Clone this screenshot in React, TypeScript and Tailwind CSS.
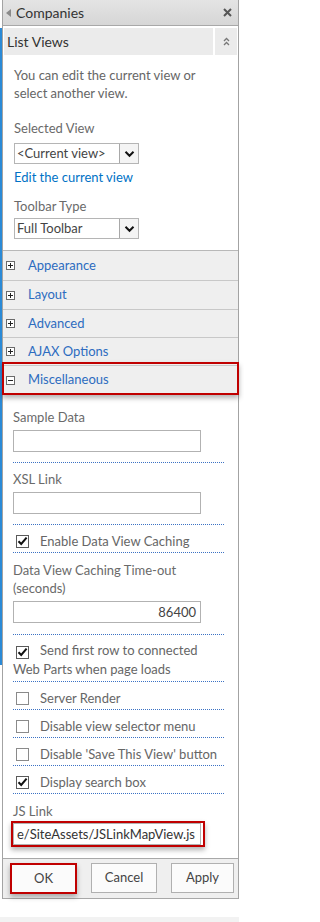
import React from 'react';

const FONT = { fontFamily: 'Lato, "Open Sans", "Liberation Sans", sans-serif' };

function PlusBox({ open }: { open?: boolean }) {
  return (
    <span className="w-[9px] h-[9px] border border-[#6b6b6b] bg-white flex items-center justify-center shrink-0">
      <svg width="7" height="7" viewBox="0 0 7 7">
        <rect x="1" y="3" width="5" height="1" fill="#222" />
        {!open && <rect x="3" y="1" width="1" height="5" fill="#222" />}
      </svg>
    </span>
  );
}

function Check({ checked }: { checked?: boolean }) {
  return (
    <span
      className={`inline-flex w-[13px] h-[13px] border bg-white items-center justify-center align-[-2px] ${
        checked ? 'border-[#5a5a5a]' : 'border-[#8a8a8a]'
      }`}
    >
      {checked && (
        <svg width="11" height="10" viewBox="0 0 11 10">
          <path d="M1.5 5.2 L4.2 8 L9.6 1.6" fill="none" stroke="#111" strokeWidth="2" />
        </svg>
      )}
    </span>
  );
}

function SelectBox({ value }: { value: string }) {
  return (
    <div className="w-[125px] h-[21px] border border-[#b5b5b5] bg-white flex items-stretch">
      <span className="flex-1 pl-[2px] text-[13px] leading-[19px] text-[#444]">{value}</span>
      <span className="w-[19px] border-l border-[#a8a8a8] bg-[#f4f4f4] flex items-center justify-center">
        <svg width="11" height="8" viewBox="0 0 11 8">
          <path d="M1.5 1.8 L5.5 5.8 L9.5 1.8" fill="none" stroke="#111" strokeWidth="2" />
        </svg>
      </span>
    </div>
  );
}

function TextBox({ value, right }: { value?: string; right?: boolean }) {
  return (
    <div
      className={`w-[188px] h-[22px] border border-[#b2b2b2] bg-white text-[13px] leading-[20px] text-[#444] px-[4px] ${
        right ? 'text-right' : ''
      }`}
    >
      {value}
    </div>
  );
}

function Section({ label, open, h }: { label: string; open?: boolean; h: string }) {
  return (
    <div className={`${h} relative flex items-center gap-[13px] pl-[3px] bg-[#efefef] border-b border-[#c8c8c8]`}>
      <PlusBox open={open} />
      <span className="text-[13px] text-[#2d6cc0]">{label}</span>
      {open && (
        <span className="absolute -left-[1px] -right-[1px] -top-[4px] -bottom-[1px] border-2 border-[#c00000] shadow-[0_3px_5px_rgba(0,0,0,0.3)]" />
      )}
    </div>
  );
}

function CheckRow({ label, checked }: { label: string; checked?: boolean }) {
  return (
    <div className="pt-[7px] pb-[2px] pl-[3px] h-[28px] border-b border-dotted border-[#3c72c4] flex items-center gap-[11px] text-[13px] leading-[18px] text-[#666]">
      <Check checked={checked} />
      <span>{label}</span>
    </div>
  );
}

export default function App() {
  return (
    <div className="w-[244px] h-[922px] bg-white relative overflow-hidden" style={FONT}>
      <div className="absolute left-0 top-[28px] h-[637px] w-[2px] bg-[#2b8ad6]" />

      <div className="ml-[2px] w-[237px] border-x border-[#a3a3a3]">
        {/* Header */}
        <div className="h-[26px] flex items-center bg-gradient-to-b from-[#e4e4e4] to-[#d6d6d6] border-b border-[#a8a8a8] pl-[3px] pr-[6px]">
          <svg width="6" height="8" viewBox="0 0 6 8" className="mr-[4px]">
            <path d="M5 0 L5 8 L0 4 Z" fill="#8a8a8a" />
          </svg>
          <span className="text-[14px] text-[#333] flex-1">Companies</span>
          <svg width="9" height="9" viewBox="0 0 9 9">
            <path d="M1 1 L8 8 M8 1 L1 8" stroke="#555" strokeWidth="2" />
          </svg>
        </div>

        {/* List Views */}
        <div className="flex gap-[2px] px-[1px] pt-[2px]">
          <div className="flex-1 h-[27px] bg-[#ebebeb] flex items-center pl-[3px] text-[14px] text-[#333]">List Views</div>
          <div className="w-[22px] h-[27px] bg-[#ebebeb] flex items-center justify-center">
            <svg width="7" height="9" viewBox="0 0 7 9">
              <path d="M1 4 L3.5 1.5 L6 4 M1 8 L3.5 5.5 L6 8" fill="none" stroke="#777" strokeWidth="1.3" />
            </svg>
          </div>
        </div>

        {/* List view settings */}
        <div className="pl-[11px] pt-[11px] pb-[11px]">
          <p className="text-[13px] leading-[18px] text-[#666] pr-[8px]">
            You can edit the current view or select another view.
          </p>
          <p className="mt-[17px] text-[13px] leading-[18px] text-[#6a6a6a]">Selected View</p>
          <div className="mt-[6px]">
            <SelectBox value="<Current view>" />
          </div>
          <p className="mt-[4px] text-[13px] leading-[18px] text-[#0072c6]">Edit the current view</p>
          <p className="mt-[11px] text-[13px] leading-[18px] text-[#6a6a6a]">Toolbar Type</p>
          <div className="mt-[3px]">
            <SelectBox value="Full Toolbar" />
          </div>
        </div>

        {/* Sections */}
        <div className="border-t border-[#b8b8b8]">
          <Section label="Appearance" h="h-[30px]" />
          <Section label="Layout" h="h-[29px]" />
          <Section label="Advanced" h="h-[28px]" />
          <Section label="AJAX Options" h="h-[28px]" />
          <Section label="Miscellaneous" h="h-[29px]" open />
        </div>

        {/* Miscellaneous */}
        <div className="ml-[10px] mr-[14px]">
          <div className="pt-[13px] pb-[10px] border-b border-dotted border-[#3c72c4]">
            <p className="text-[13px] leading-[18px] text-[#6a6a6a]">Sample Data</p>
            <div className="mt-[4px]">
              <TextBox />
            </div>
          </div>
          <div className="pt-[7px] pb-[10px] border-b border-dotted border-[#3c72c4]">
            <p className="text-[13px] leading-[18px] text-[#6a6a6a]">XSL Link</p>
            <div className="mt-[4px]">
              <TextBox />
            </div>
          </div>
          <CheckRow label="Enable Data View Caching" checked />
          <div className="pt-[8px] pb-[11px] border-b border-dotted border-[#3c72c4]">
            <p className="text-[13px] leading-[18px] text-[#6a6a6a]">
              Data View Caching Time-out (seconds)
            </p>
            <div className="mt-[4px]">
              <TextBox value="86400" right />
            </div>
          </div>
          <div className="pt-[6px] pb-[2px] border-b border-dotted border-[#3c72c4]">
            <p className="text-[13px] leading-[19px] text-[#666]">
              <span className="inline-block w-[27px] pl-[3px]">
                <Check checked />
              </span>
              Send first row to connected Web Parts when page loads
            </p>
          </div>
          <CheckRow label="Server Render" />
          <CheckRow label="Disable view selector menu" />
          <CheckRow label="Disable 'Save This View' button" />
          <CheckRow label="Display search box" checked />
          <div className="pt-[8px] pb-[13px]">
            <p className="text-[13px] leading-[18px] text-[#6a6a6a]">JS Link</p>
            <div className="mt-[3px] relative w-[188px]">
              <div className="w-[188px] h-[22px] border border-[#b2b2b2] bg-white text-[13px] leading-[20px] text-[#333] pl-[3px] whitespace-nowrap overflow-hidden">
                e/SiteAssets/JSLinkMapView.js
              </div>
              <span className="absolute -left-[2px] -right-[4px] -top-[2px] -bottom-[2px] border-2 border-[#c00000] shadow-[0_3px_5px_rgba(0,0,0,0.3)]" />
            </div>
          </div>
        </div>

        {/* Footer */}
        <div className="h-[41px] bg-[#efefef] border-y border-[#a8a8a8] flex items-start gap-[14px] pl-[7px] pt-[4px]">
          <button className="w-[67px] h-[31px] bg-[#fbfbfb] border-2 border-[#c00000] shadow-[0_3px_5px_rgba(0,0,0,0.3)] text-[13px] text-[#444]">
            OK
          </button>
          <button className="w-[66px] h-[30px] bg-[#fbfbfb] border border-[#b0b0b0] text-[13px] text-[#444]">
            Cancel
          </button>
          <button className="w-[63px] h-[30px] bg-[#fbfbfb] border border-[#b0b0b0] text-[13px] text-[#444]">
            Apply
          </button>
        </div>
      </div>

      <div className="mt-[18px] h-[5px] w-[239px] bg-[#f2f2f2]" />
    </div>
  );
}
